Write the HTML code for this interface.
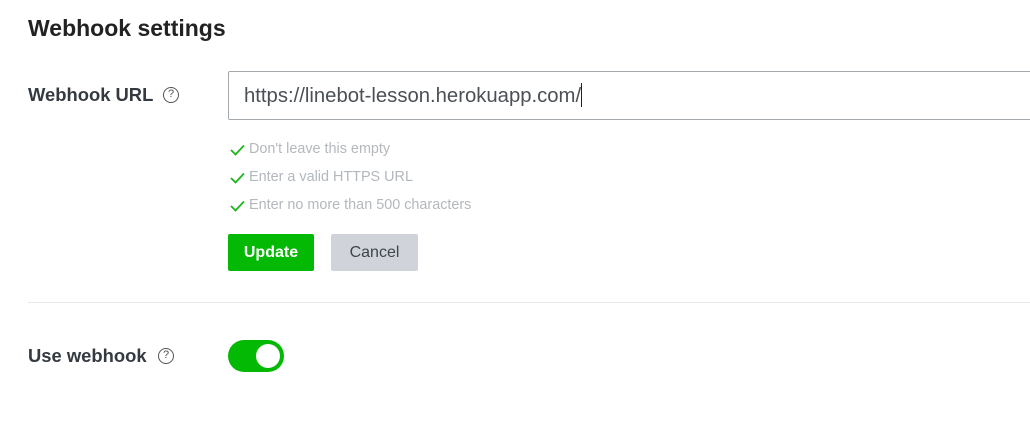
<!DOCTYPE html>
<html><head><style>
body{margin:0;width:1030px;height:426px;background:#fff;font-family:"Liberation Sans",Arial,sans-serif;position:relative;overflow:hidden}
.a{position:absolute;white-space:nowrap}
h1{position:absolute;left:28px;top:15px;margin:0;font-size:23px;font-weight:bold;color:#222}
.lbl{font-size:18px;font-weight:bold;color:#353a40}
.q{position:absolute;width:16px;height:16px;border:1.5px solid #555;border-radius:50%;box-sizing:border-box;font-size:11px;line-height:13px;text-align:center;color:#555;font-weight:normal}
.chk{font-size:14.4px;color:#b3b8bd}
.chk svg{position:absolute;left:-19px;top:3px}
</style></head><body>
<h1>Webhook settings</h1>
<div class="a lbl" style="left:28px;top:84px;font-size:18.4px">Webhook URL</div>
<div class="q" style="left:163px;top:87px">?</div>
<div class="a" style="left:228px;top:71px;width:820px;height:49px;border:1px solid #a4a9ae;border-radius:2px;box-sizing:border-box"></div>
<div class="a" style="left:244px;top:83px;font-size:20.3px;color:#4b5056">https://linebot-lesson.herokuapp.com/<span style="display:inline-block;width:1px;height:24px;background:#222;vertical-align:-5px"></span></div>
<div class="a chk" style="left:249px;top:141px"><svg width="15" height="12" viewBox="0 0 15 12"><path d="M1 6l4.5 4.5L14 1.5" fill="none" stroke="#1cb51c" stroke-width="1.8"/></svg>Don't leave this empty</div>
<div class="a chk" style="left:249px;top:169px"><svg width="15" height="12" viewBox="0 0 15 12"><path d="M1 6l4.5 4.5L14 1.5" fill="none" stroke="#1cb51c" stroke-width="1.8"/></svg>Enter a valid HTTPS URL</div>
<div class="a chk" style="left:249px;top:197px"><svg width="15" height="12" viewBox="0 0 15 12"><path d="M1 6l4.5 4.5L14 1.5" fill="none" stroke="#1cb51c" stroke-width="1.8"/></svg>Enter no more than 500 characters</div>
<div class="a" style="left:228px;top:234px;width:86px;height:37px;background:#04b904;border-radius:2px;color:#fff;font-size:16px;font-weight:bold;text-align:center;line-height:37px">Update</div>
<div class="a" style="left:331px;top:234px;width:87px;height:37px;background:#d0d4da;border-radius:2px;color:#3f444a;font-size:16px;text-align:center;line-height:37px">Cancel</div>
<div class="a" style="left:28px;top:302px;width:1002px;height:1px;background:#e6e8eb"></div>
<div class="a lbl" style="left:28px;top:345px;font-size:18.4px">Use webhook</div>
<div class="q" style="left:158px;top:348px">?</div>
<div class="a" style="left:228px;top:340px;width:56px;height:32px;background:#04b904;border-radius:16px"></div>
<div class="a" style="left:256px;top:344px;width:24px;height:24px;background:#fff;border-radius:50%"></div>
</body></html>
